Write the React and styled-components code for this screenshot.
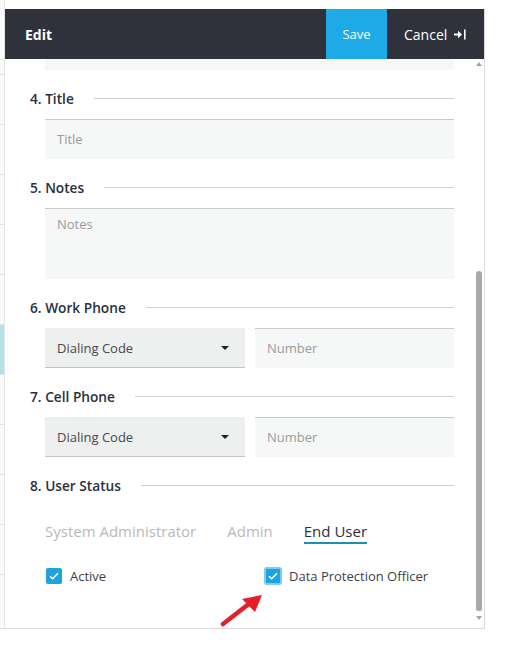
import React from 'react'
import styled, { createGlobalStyle } from 'styled-components'

const GlobalStyle = createGlobalStyle`
  html, body {
    margin: 0;
    padding: 0;
    background: #ffffff;
    font-family: "Open Sans", "Noto Sans", sans-serif;
  }
`

const App = () => {
  return (
    <>
      <GlobalStyle />
      <Page>
        <Strip>
          <StripRow $h={60} />
          <StripRow $h={15} />
          <StripRow $h={50} />
          <StripRow $h={50} />
          <StripRow $h={50} />
          <StripRow $h={50} />
          <StripRow $h={50} />
          <StripRow $h={50} $active />
          <StripRow $h={50} />
          <StripRow $h={50} />
          <StripRow $h={50} />
          <StripRow $h={50} />
          <StripRow $h={3} $last />
        </Strip>
        <Panel>
          <Header>
            <HeaderTitle>Edit</HeaderTitle>
            <SaveButton>Save</SaveButton>
            <CancelButton>
              Cancel
              <svg width="13" height="11" viewBox="0 0 13 11">
                <path d="M1 5.5h6.5" stroke="#fff" strokeWidth="2" />
                <path d="M5 1.8l4 3.7-4 3.7z" fill="#fff" />
                <rect x="11" y="0.5" width="1.6" height="10" fill="#fff" />
              </svg>
            </CancelButton>
          </Header>
          <Body>
            <Content>
              <ClippedField />
              <Section>
                <Label>4. Title</Label>
                <Field>Title</Field>
              </Section>
              <Section>
                <Label>5. Notes</Label>
                <Field $tall>Notes</Field>
              </Section>
              <Section>
                <Label>6. Work Phone</Label>
                <PhoneRow>
                  <Select>
                    Dialing Code
                    <Caret />
                  </Select>
                  <Field>Number</Field>
                </PhoneRow>
              </Section>
              <Section>
                <Label>7. Cell Phone</Label>
                <PhoneRow>
                  <Select>
                    Dialing Code
                    <Caret />
                  </Select>
                  <Field>Number</Field>
                </PhoneRow>
              </Section>
              <Section>
                <Label>8. User Status</Label>
                <Tabs>
                  <Tab>System Administrator</Tab>
                  <Tab>Admin</Tab>
                  <Tab $active>End User</Tab>
                </Tabs>
                <Checks>
                  <CheckItem>
                    <Box>
                      <CheckMark />
                    </Box>
                    Active
                  </CheckItem>
                  <CheckItem>
                    <Box $focused>
                      <CheckMark />
                    </Box>
                    Data Protection Officer
                  </CheckItem>
                </Checks>
              </Section>
            </Content>
            <Scrollbar>
              <ScrollArrow />
              <ScrollThumb />
              <ScrollArrow $down />
            </Scrollbar>
          </Body>
        </Panel>
        <Pointer width="50" height="40" viewBox="0 0 50 40">
          <path d="M3 34L30 13" stroke="#e61e28" strokeWidth="4.5" strokeLinecap="round" />
          <path d="M42 5L22 9L35 22Z" fill="#e61e28" />
        </Pointer>
      </Page>
    </>
  )
}

const CheckMark = () => (
  <svg width="10" height="8" viewBox="0 0 10 8">
    <path d="M1 4.2l2.7 2.6L9 1.2" stroke="#fff" strokeWidth="1.5" fill="none" />
  </svg>
)

const Page = styled.div`
  position: relative;
  display: flex;
  width: 485px;
  height: 628px;
  border-bottom: 1px solid #dcdcdc;
`

const Strip = styled.div`
  width: 4px;
  display: flex;
  flex-direction: column;
  border-right: 1px solid #e4e4e4;
  background: #fbfbfb;
`

const StripRow = styled.div`
  height: ${p => p.$h}px;
  box-sizing: border-box;
  border-bottom: ${p => (p.$last ? 'none' : '1px solid #e2e2e2')};
  background: ${p => (p.$active ? '#b5e3e5' : 'transparent')};
`

const Panel = styled.div`
  width: 480px;
  margin-top: 9px;
  display: flex;
  flex-direction: column;
  border-right: 1px solid #dadada;
  box-sizing: border-box;
`

const Header = styled.div`
  height: 50px;
  display: flex;
  align-items: stretch;
  background: #2f323a;
  color: #fff;
`

const HeaderTitle = styled.div`
  flex: 1;
  display: flex;
  align-items: center;
  padding-left: 20px;
  font-size: 14px;
  font-weight: 700;
`

const SaveButton = styled.div`
  width: 61px;
  display: flex;
  align-items: center;
  justify-content: center;
  background: #1eaae7;
  font-size: 13px;
`

const CancelButton = styled.div`
  width: 97px;
  display: flex;
  align-items: center;
  gap: 6px;
  padding-left: 17px;
  box-sizing: border-box;
  font-size: 14px;
`

const Body = styled.div`
  flex: 1;
  display: flex;
  overflow: hidden;
`

const Content = styled.div`
  width: 449px;
  padding-left: 25px;
  box-sizing: border-box;
  display: flex;
  flex-direction: column;
`

const ClippedField = styled.div`
  height: 11px;
  margin-left: 15px;
  background: #f6f7f7;
`

const Section = styled.div`
  margin-top: 18px;
`

const Label = styled.div`
  height: 20px;
  display: flex;
  align-items: center;
  gap: 20px;
  font-size: 13.7px;
  font-weight: 600;
  color: #2b303b;
  &::after {
    content: '';
    flex: 1;
    height: 1px;
    background: #cfcfcf;
  }
`

const Field = styled.div`
  margin-top: 11px;
  margin-left: 15px;
  height: ${p => (p.$tall ? 71 : 40)}px;
  box-sizing: border-box;
  border-top: 1px solid #c9c9c9;
  background: #f6f7f7;
  padding: ${p => (p.$tall ? '6px 12px' : '0 12px 1px')};
  display: flex;
  align-items: ${p => (p.$tall ? 'flex-start' : 'center')};
  font-size: 13px;
  color: #9b9b9b;
`

const PhoneRow = styled.div`
  display: grid;
  grid-template-columns: 200px 199px;
  gap: 10px;
  margin-top: 11px;
  margin-left: 15px;
  & > ${Field} {
    margin: 0;
  }
`

const Select = styled.div`
  height: 40px;
  box-sizing: border-box;
  background: #eeefef;
  border-bottom: 1px solid #c4c4c4;
  display: flex;
  align-items: center;
  justify-content: space-between;
  padding: 0 16px 0 12px;
  font-size: 13px;
  color: #444950;
`

const Caret = styled.span`
  width: 0;
  height: 0;
  border-left: 4px solid transparent;
  border-right: 4px solid transparent;
  border-top: 4px solid #222;
`

const Tabs = styled.div`
  display: flex;
  gap: 31px;
  margin-top: 26px;
  margin-left: 15px;
`

const Tab = styled.div`
  font-size: 15px;
  line-height: 20px;
  padding-bottom: 1px;
  color: ${p => (p.$active ? '#2b303b' : '#b9b9b9')};
  border-bottom: 2px solid ${p => (p.$active ? '#1b90b2' : 'transparent')};
`

const Checks = styled.div`
  display: grid;
  grid-template-columns: 218px 1fr;
  margin-top: 22px;
  margin-left: 16px;
`

const CheckItem = styled.div`
  display: flex;
  align-items: center;
  gap: 8px;
  height: 20px;
  font-size: 13px;
  color: #3a3f48;
`

const Box = styled.span`
  width: 16px;
  height: 16px;
  box-sizing: border-box;
  border-radius: 2px;
  background: #1ea3df;
  display: flex;
  align-items: center;
  justify-content: center;
  ${p =>
    p.$focused &&
    `
    border: 2px solid #7fc8ef;
    border-radius: 3px;
    width: 18px;
    height: 18px;
    margin-right: -1px;
  `}
`

const Scrollbar = styled.div`
  width: 6px;
  margin-left: 22px;
  display: flex;
  flex-direction: column;
  align-items: center;
  padding: 3px 0 8px;
`

const ScrollArrow = styled.span`
  width: 0;
  height: 0;
  margin-top: ${p => (p.$down ? '5px' : '0')};
  margin-bottom: ${p => (p.$down ? '0' : 'auto')};
  border-left: 3px solid transparent;
  border-right: 3px solid transparent;
  ${p => (p.$down ? 'border-top: 4px solid #a3a3a3;' : 'border-bottom: 4px solid #a3a3a3;')}
`

const ScrollThumb = styled.span`
  width: 6px;
  height: 340px;
  background: #a8a8a8;
  border-radius: 3px 3px 2px 2px;
`

const Pointer = styled.svg`
  position: absolute;
  left: 220px;
  top: 590px;
`

export default App
